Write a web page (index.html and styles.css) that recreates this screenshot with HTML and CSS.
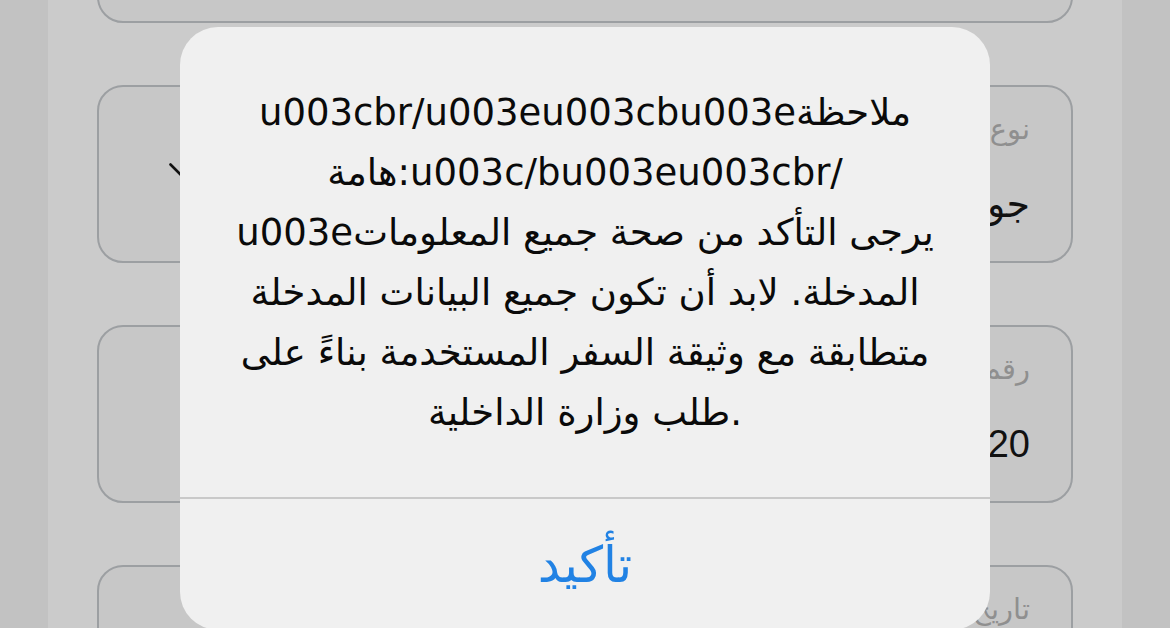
FILE: index.html
```html
<!DOCTYPE html>
<html lang="ar">
<head>
<meta charset="utf-8">
<title>تنبيه</title>
<link rel="stylesheet" href="styles.css">
</head>
<body>
<div class="page">
  <div class="card card-top"></div>
  <div class="card">
    <div class="field">
      <div class="label">نوع الوثيقة</div>
      <div class="value">جواز سفر</div>
    </div>
    <svg class="chevron" width="26" height="15" viewBox="0 0 26 15"><polyline points="1.5,1.5 13,13 24.5,1.5" fill="none" stroke="#111" stroke-width="2.6" stroke-linecap="round" stroke-linejoin="round"/></svg>
  </div>
  <div class="card">
    <div class="field">
      <div class="label">رقم الوثيقة</div>
      <div class="value num">A1234520</div>
    </div>
  </div>
  <div class="card">
    <div class="field">
      <div class="label">تاريخ انتهاء الوثيقة</div>
      <div class="value">2027-01-01</div>
    </div>
  </div>
</div>

<div class="alert">
  <div class="alert-body">
    <div class="line"><span class="iso">u003cbr/u003eu003cbu003e</span><span class="iso" dir="rtl">ملاحظة</span></div>
    <div class="line"><span class="iso" dir="rtl">هامة</span><span class="iso">:u003c/bu003eu003cbr/</span></div>
    <div class="line"><span class="iso">u003e</span><span class="iso" dir="rtl">يرجى التأكد من صحة جميع المعلومات</span></div>
    <div class="line" dir="rtl">المدخلة. لابد أن تكون جميع البيانات المدخلة</div>
    <div class="line" dir="rtl">متطابقة مع وثيقة السفر المستخدمة بناءً على</div>
    <div class="line"><span class="iso" dir="rtl">طلب وزارة الداخلية</span><span class="iso">.</span></div>
  </div>
  <div class="alert-action">تأكيد</div>
</div>
</body>
</html>
```
FILE: styles.css
```css
html, body {
  margin: 0;
  padding: 0;
}
body {
  background: #c2c2c2;
  width: 1170px;
  height: 628px;
  overflow: hidden;
  font-family: "DejaVu Sans", "Liberation Sans", sans-serif;
}
.page {
  width: 1074px;
  height: 628px;
  margin: 0 auto;
  background: #cbcbcb;
  box-sizing: border-box;
  padding: 0 49px;
  display: flex;
  flex-direction: column;
  gap: 62px;
  overflow: hidden;
}
.card {
  flex: none;
  height: 178px;
  box-sizing: border-box;
  border: 2px solid #9c9fa2;
  border-radius: 26px;
  background: #c7c7c7;
  direction: rtl;
  display: flex;
  align-items: center;
  padding: 0 41px 0 70px;
}
.card-top {
  margin-top: -155px;
}
.field {
  display: flex;
  flex-direction: column;
  align-self: flex-start;
  padding-top: 24px;
  gap: 34px;
}
.label {
  font-size: 29px;
  line-height: 36px;
  color: #8f8f8f;
}
.value {
  font-size: 38px;
  line-height: 46px;
  color: #111;
}
.num {
  font-family: "Liberation Sans", sans-serif;
  direction: ltr;
  text-align: right;
}
.chevron {
  margin-right: auto;
  margin-top: -8px;
}
.alert {
  position: absolute;
  left: 180px;
  top: 27px;
  width: 810px;
  height: 603px;
  background: #f0f0f0;
  border-radius: 38px;
  overflow: hidden;
  display: flex;
  flex-direction: column;
}
.alert-body {
  padding: 56px 20px 54px;
  border-bottom: 2px solid #c9c9c9;
}
.line {
  text-align: center;
  font-size: 37px;
  line-height: 60px;
  color: #0a0a0a;
  white-space: nowrap;
}
.line:not([dir]) {
  direction: ltr;
}
.iso {
  unicode-bidi: isolate;
}
.alert-action {
  height: 132px;
  display: flex;
  align-items: center;
  justify-content: center;
  font-size: 50px;
  color: #2182e4;
  direction: rtl;
}
```
